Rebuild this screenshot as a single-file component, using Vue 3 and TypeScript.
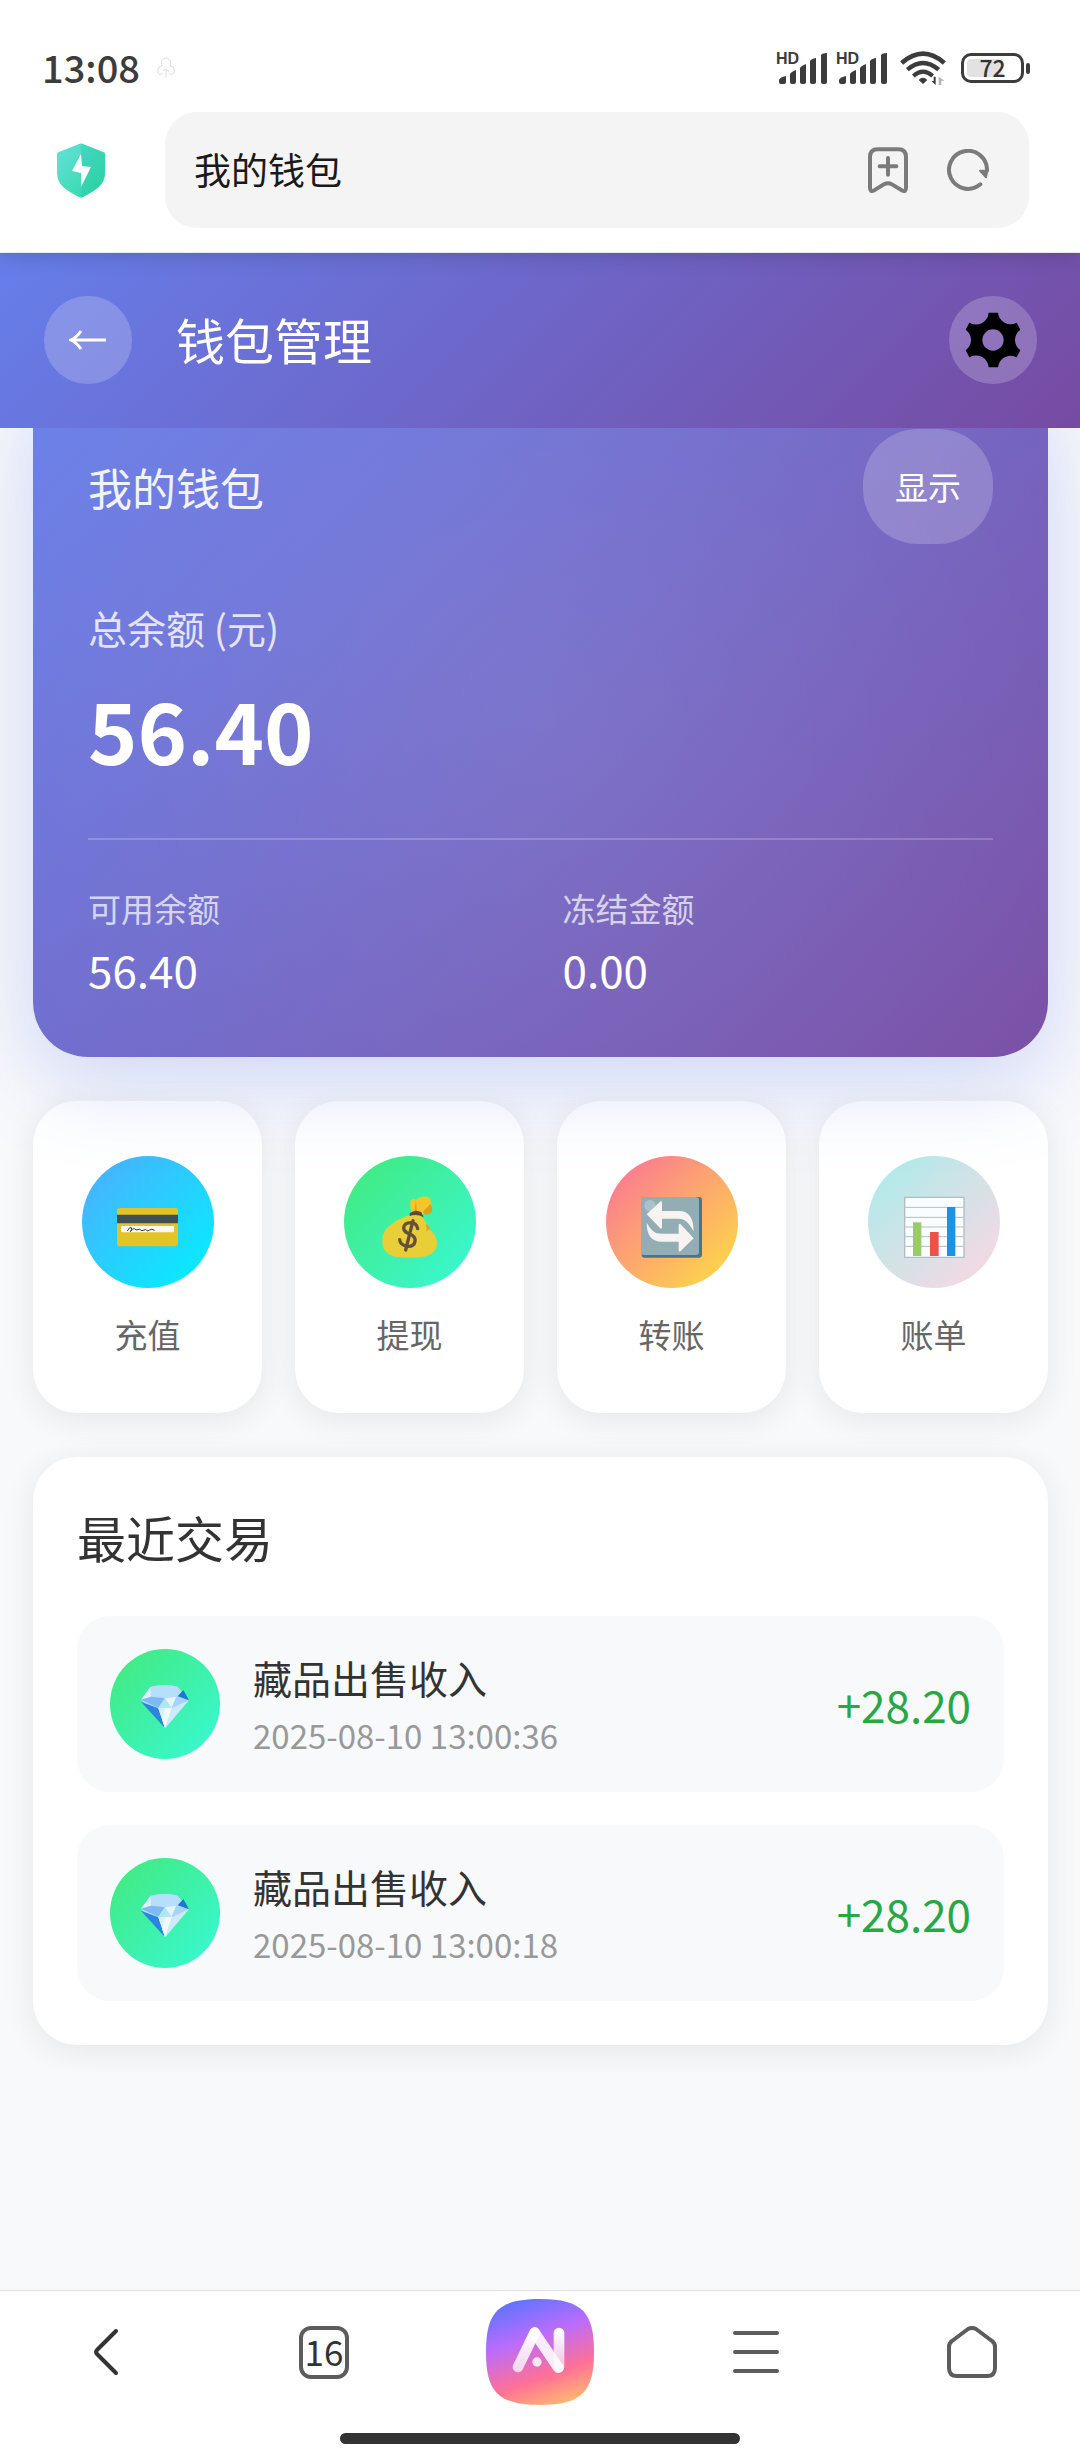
<script setup lang="ts">
import { ref } from 'vue'

interface QuickAction {
  id: 'recharge' | 'withdraw' | 'transfer' | 'bill'
  label: string
}

interface Transaction {
  id: number
  title: string
  time: string
  amount: string
}

const address = ref('我的钱包')

const actions: QuickAction[] = [
  { id: 'recharge', label: '充值' },
  { id: 'withdraw', label: '提现' },
  { id: 'transfer', label: '转账' },
  { id: 'bill', label: '账单' },
]

const transactions: Transaction[] = [
  { id: 1, title: '藏品出售收入', time: '2025-08-10 13:00:36', amount: '+28.20' },
  { id: 2, title: '藏品出售收入', time: '2025-08-10 13:00:18', amount: '+28.20' },
]
</script>

<template>
  <div class="screen">
    <div class="chrome">
      <div class="status">
        <div class="status-left">
          <span class="clock">13:08</span>
          <svg class="ghost" width="20" height="22" viewBox="0 0 20 22" fill="none" stroke="#dcdcdc" stroke-width="1" aria-hidden="true">
            <path d="M6 9C4 4 7 1 10 1s6 3 4 8c3 0 5 3 4 6s-4 3-5 1M6 9c-3 0-5 3-4 6s4 3 5 1M10 12v8M7 14l3-2 3 2" />
          </svg>
        </div>
        <div class="status-right">
          <div v-for="n in 2" :key="n" class="signal">
            <span class="hd">HD</span>
            <svg width="50" height="32" viewBox="0 0 50 32" fill="#3c3c3c" aria-hidden="true">
              <path d="M2 28q1-3 7-4v6q0 2-2 2H4q-2 0-2-2z" />
              <path d="M13 22q1-2 6-4v12q0 2-2 2h-2q-2 0-2-2z" />
              <path d="M23 16q1-2 6-4v18q0 2-2 2h-2q-2 0-2-2z" />
              <path d="M33 9q1-2 6-3v24q0 2-2 2h-2q-2 0-2-2z" />
              <path d="M44 3q1-2 6-2v29q0 2-2 2h-2q-2 0-2-2z" />
            </svg>
          </div>
          <svg class="wifi" width="46" height="34" viewBox="0 0 138 102" fill="none" stroke="#3c3c3c" aria-hidden="true">
            <path d="M5 36Q69-20 133 36" stroke-width="14" />
            <path d="M22 56Q69 16 116 56" stroke-width="13" />
            <path d="M40 75Q69 49 98 75" stroke-width="12" />
            <path d="M56 87q13-13 26 0L69 99z" fill="#3c3c3c" stroke="none" />
            <path d="M107 77v25L94 90h7V77z" fill="#3c3c3c" stroke="none" />
            <path d="M116 102V77l17 12h-9v13z" fill="#b5b5b5" stroke="none" />
          </svg>
          <div class="battery">
            <div class="battery-body"><span>72</span></div>
            <i></i>
          </div>
        </div>
      </div>

      <div class="address-row">
        <svg class="shield" width="48" height="55" viewBox="0 0 48 55" aria-hidden="true">
          <defs>
            <linearGradient id="shieldFill" x1="0" y1="0" x2="1" y2="1">
              <stop offset="0" stop-color="#66e0da" />
              <stop offset="1" stop-color="#2bd8a2" />
            </linearGradient>
          </defs>
          <path d="M22 1q2-1 4 0l20 8q2 0 2 2v19c0 12-9 17-22 24q-2 1-4 0C9 47 0 42 0 30V11q0-2 2-2z" fill="url(#shieldFill)" />
          <path d="M24 0q1 0 2 1l20 8q2 0 2 2v19c0 12-9 17-22 24l-2 1z" fill="#12b99a" fill-opacity=".22" />
          <path d="M24 11L15 28l9 2v14l10-20-9-1z" fill="#fff" />
        </svg>
        <div class="address">
          <input v-model="address" type="text" aria-label="地址栏" />
          <button type="button" aria-label="添加书签">
            <svg width="40" height="46" viewBox="384 350 120 138" fill="none" stroke="#7b7b7b" stroke-width="12" stroke-linecap="round" stroke-linejoin="round">
              <path d="M390 380q0-23 23-23h62q23 0 23 23v92q0 13-11 9l-31-19q-12-7-24 0l-31 19q-11 4-11-9z" />
              <path d="M444 383v50M419 408h50" />
            </svg>
          </button>
          <button type="button" aria-label="刷新">
            <svg width="42" height="42" viewBox="621 357 126 126" fill="none" stroke="#7b7b7b" stroke-width="12" stroke-linecap="round">
              <path d="M721 463A57 57 0 1 1 741 422" />
              <path d="M720 422h22l-4 20z" fill="#7b7b7b" stroke-width="6" stroke-linejoin="round" />
            </svg>
          </button>
        </div>
      </div>
    </div>

    <header class="header">
      <button type="button" class="round" aria-label="返回">
        <svg width="38" height="20" viewBox="0 0 38 20" fill="none" stroke="#fff" stroke-width="3">
          <path d="M37 10H3M12 1Q8 7 2 10q6 3 10 9" />
        </svg>
      </button>
      <h1>钱包管理</h1>
      <button type="button" class="round" aria-label="设置">
        <svg width="56" height="56" viewBox="677 217 168 168">
          <path
            fill="#000"
            fill-rule="evenodd"
            d="M748 219H776A38 38 0 0 0 832 249L843 270A38 38 0 0 0 843 332L832 353A38 38 0 0 0 776 383H748A38 38 0 0 0 690 353L679 332A38 38 0 0 0 679 270L690 249A38 38 0 0 0 748 219ZM761 269a32 32 0 1 0 0 64a32 32 0 1 0 0-64Z"
          />
        </svg>
      </button>
    </header>

    <main class="content">
      <section class="wallet">
        <div class="wallet-top">
          <h2>我的钱包</h2>
          <button type="button" class="toggle">显示</button>
        </div>
        <div class="total-label">总余额 (元)</div>
        <div class="total">56.40</div>
        <div class="split">
          <div>
            <div class="split-label">可用余额</div>
            <div class="split-value">56.40</div>
          </div>
          <div>
            <div class="split-label">冻结金额</div>
            <div class="split-value">0.00</div>
          </div>
        </div>
      </section>

      <nav class="actions" aria-label="快捷操作">
        <button v-for="action in actions" :key="action.id" type="button" class="action">
          <span class="action-icon" :class="action.id">
            <svg v-if="action.id === 'recharge'" width="64" height="74" viewBox="288 315 192 222">
              <rect x="291" y="384" width="183" height="115" rx="9" fill="#e3c427" />
              <path d="M291 404h183v26H291z" fill="#3f4f52" />
              <rect x="303" y="438" width="159" height="19" rx="3" fill="#f8faf5" />
              <path d="M322 453q7-14 12-10 3 4-3 12 8-12 13-9 3 6 10 3 5-3 8 1t10 0q5-3 8 1t9-1 15 1" fill="none" stroke="#2f3a3a" stroke-width="3" />
            </svg>
            <svg v-else-if="action.id === 'withdraw'" width="64" height="74" viewBox="1074 315 192 222">
              <path d="M1171 362q9-10 17-3 6-7 18-9 20-2 25 8l2 17q6 4 4 11-6 16-24 17l-38-8q-6-20-4-33z" fill="#f6c52b" />
              <path d="M1188 360l-4 32 6 1zM1231 372q10 12 3 25-9 9-21 6l-4-8z" fill="#d9a11c" />
              <path d="M1171 404q-46 14-74 44-15 26-8 52 8 24 36 30 44 5 88 0 32-6 38-34 2-26-22-48-12-26-26-42z" fill="#e9cf37" />
              <path d="M1169 400q17-14 35-3l7 15q-20-11-42-4z" fill="#5c4a3b" />
              <path d="M1218 430q9 6 12 17l-10 6z" fill="#d2a92c" />
              <path d="M1193 446q-3-17-20-18-21 0-22 16 1 12 18 18 18 6 16 22-3 16-22 15-22-2-24-20M1179 422l-22 88" fill="none" stroke="#665138" stroke-width="10" stroke-linecap="round" />
            </svg>
            <svg v-else-if="action.id === 'transfer'" width="64" height="74" viewBox="0 -30 192 222">
              <rect x="5" y="6" width="181" height="182" rx="9" fill="#4b7585" />
              <rect x="3" y="6" width="174" height="174" rx="9" fill="#93adb5" />
              <circle cx="30" cy="32" r="17" fill="#a7c3cc" />
              <path d="M20 58L60 20q6-5 6 3v25h50c32 0 45 22 45 61-14-24-23-37-45-38H66v25q0 8-6 3z" fill="#f7f3f0" />
              <path d="M161 130l-39 38q-6 5-6-3v-25H66c-32 0-46-20-46-57 14 24 24 33 46 33h50V91q0-8 6-3z" fill="#f7f3f0" />
            </svg>
            <svg v-else width="64" height="74" viewBox="0 -30 192 222">
              <path d="M8 7h178v180H8z" fill="#fafdfe" stroke="#afbec6" stroke-width="4" />
              <path d="M10 37h174M10 67h174M10 96h174M10 125h174M10 154h174" stroke="#afbec6" stroke-width="3" />
              <path d="M33 82h25v101H33z" fill="#9acb69" />
              <path d="M84 111h26v72H84z" fill="#ed5149" />
              <path d="M135 36h25v147h-25z" fill="#1d92e3" />
            </svg>
          </span>
          <span class="action-label">{{ action.label }}</span>
        </button>
      </nav>

      <section class="recent">
        <h2>最近交易</h2>
        <ul>
          <li v-for="item in transactions" :key="item.id">
            <span class="tx-icon">
              <svg width="48" height="50" viewBox="0 -18 144 150">
                <path d="M0 44L28 6Q72-6 110 5l34 39-72 86z" fill="#b4dcfa" />
                <path d="M28 6Q72-6 110 5l-4 30-34 5-44-8z" fill="#b7dffb" />
                <path d="M28 6L0 44l30-9z" fill="#dff1fd" />
                <path d="M0 44l30-9 42 5-20 28z" fill="#7db9f5" />
                <path d="M0 50l52 20 20 60z" fill="#2b84e0" />
                <path d="M52 70l20-30 20 28-20 62z" fill="#d8f1fc" />
                <path d="M52 70l20-30 20 28z" fill="#b0e5f2" />
                <path d="M72 40l34-5-14 33z" fill="#e5f4fe" />
                <path d="M106 35l38 9-52 26z" fill="#a5d3fa" />
                <path d="M92 70l52-24-72 84z" fill="#cfe8fb" />
                <path d="M72 68l20 2-20 60-8-24z" fill="#eefafe" />
                <path d="M127 15l17 31-34-12z" fill="#1979cd" />
              </svg>
            </span>
            <div class="tx-text">
              <div class="tx-title">{{ item.title }}</div>
              <time class="tx-time">{{ item.time }}</time>
            </div>
            <span class="tx-amount">{{ item.amount }}</span>
          </li>
        </ul>
      </section>
    </main>

    <footer class="toolbar">
      <div class="toolbar-row">
        <button type="button" aria-label="后退">
          <svg width="30" height="50" viewBox="0 0 30 50" fill="none" stroke="#333" stroke-width="4" stroke-linecap="round" stroke-linejoin="round">
            <path d="M23 4L4 23q-2 2 0 4l19 19" />
          </svg>
        </button>
        <button type="button" aria-label="标签页"><span class="tabs">16</span></button>
        <button type="button" aria-label="智能助手">
          <svg width="108" height="106" viewBox="138 86 324 318">
            <defs>
              <linearGradient id="aiFill" x1=".3" y1="0" x2=".65" y2="1">
                <stop offset="0" stop-color="#5f74ff" />
                <stop offset=".35" stop-color="#b86cff" />
                <stop offset=".73" stop-color="#ff7096" />
                <stop offset="1" stop-color="#ffb472" />
              </linearGradient>
              <linearGradient id="aiLeft" gradientUnits="userSpaceOnUse" x1="0" y1="180" x2="0" y2="300">
                <stop offset="0" stop-color="#fff" />
                <stop offset="1" stop-color="#fff" stop-opacity=".72" />
              </linearGradient>
              <linearGradient id="aiRight" gradientUnits="userSpaceOnUse" x1="0" y1="180" x2="0" y2="270">
                <stop offset="0" stop-color="#fff" />
                <stop offset="1" stop-color="#fff" stop-opacity=".65" />
              </linearGradient>
            </defs>
            <path d="M300 86C430 86 462 130 462 245S430 404 300 404 138 360 138 245 170 86 300 86Z" fill="url(#aiFill)" />
            <g fill="none" stroke-linecap="round" stroke-width="32">
              <path d="M357 188V290" stroke="url(#aiRight)" />
              <path d="M234 290L284 187" stroke="url(#aiLeft)" />
              <path d="M284 187L355 292" stroke="#fff" stroke-opacity=".88" />
            </g>
            <circle cx="291" cy="275" r="14" fill="#fde6f3" />
          </svg>
        </button>
        <button type="button" aria-label="菜单">
          <svg width="46" height="42" viewBox="0 0 46 42" stroke="#5c5c5c" stroke-width="4" stroke-linecap="round">
            <path d="M2 2h42M2 21h42M2 40h42" />
          </svg>
        </button>
        <button type="button" aria-label="主页">
          <svg width="50" height="52" viewBox="0 0 50 52" fill="none" stroke="#5c5c5c" stroke-width="4" stroke-linejoin="round">
            <path d="M21 3q4-2 8 0l16 12q3 2 3 6v21q0 8-8 8H10q-8 0-8-8V21q0-4 3-6z" />
          </svg>
        </button>
      </div>
      <div class="indicator"></div>
    </footer>
  </div>
</template>

<style>
body {
  margin: 0;
  background: #f8f9fb;
}
</style>

<style scoped>
.screen {
  display: flex;
  flex-direction: column;
  min-height: 100vh;
  font-family: "Noto Sans CJK SC", "Noto Sans", sans-serif;
  color: #333;
}

button {
  padding: 0;
  border: 0;
  background: none;
  font: inherit;
  color: inherit;
}

svg {
  display: block;
}

h1,
h2,
ul {
  margin: 0;
  padding: 0;
  font-weight: 400;
  list-style: none;
}

/* status bar and address bar */
.chrome {
  position: relative;
  z-index: 20;
  padding-bottom: 24px;
  border-bottom: 1px solid #e6e9f2;
  background: #fff;
  box-shadow: 0 0 22px rgba(0, 0, 0, 0.2);
}

.status {
  display: flex;
  align-items: center;
  justify-content: space-between;
  height: 40px;
  padding: 48px 50px 24px 42px;
}

.status-left,
.status-right,
.signal,
.battery {
  display: flex;
  align-items: center;
}

.status-left {
  gap: 16px;
}

.clock {
  padding-bottom: 3px;
  font-size: 38px;
  font-weight: 500;
  line-height: 40px;
  color: #3c3c3c;
}

.signal {
  position: relative;
  width: 50px;
  margin-right: 10px;
}

.hd {
  position: absolute;
  top: -2px;
  left: -1px;
  font-family: "Liberation Sans", sans-serif;
  font-size: 16px;
  font-weight: 700;
  line-height: 18px;
  color: #3c3c3c;
}

.wifi {
  margin: 0 15px 0 3px;
}

.battery-body {
  display: flex;
  align-items: center;
  justify-content: center;
  box-sizing: border-box;
  width: 63px;
  height: 30px;
  border: 3px solid #3c3c3c;
  border-radius: 10px;
  background: linear-gradient(90deg, #e2e2e2 66%, #fff 72%) content-box;
  padding: 3px;
  font-size: 23px;
  font-weight: 500;
  line-height: 24px;
}

.battery-body span {
  padding-bottom: 2px;
}

.battery i {
  width: 4px;
  height: 11px;
  margin-left: 2px;
  border-radius: 2px;
  background: #3c3c3c;
}

.address-row {
  display: flex;
  align-items: center;
  padding: 0 51px 0 57px;
}

.shield {
  flex: none;
  margin-right: 60px;
}

.address {
  display: flex;
  flex: 1;
  align-items: center;
  gap: 39px;
  height: 116px;
  padding: 0 40px 0 29px;
  border-radius: 32px;
  background: #f4f4f4;
}

.address input {
  flex: 1;
  min-width: 0;
  padding: 0 0 3px;
  border: 0;
  outline: 0;
  background: none;
  font: inherit;
  font-size: 37px;
  line-height: 54px;
  color: #1a1a1a;
}

/* page header */
.header {
  position: sticky;
  top: 0;
  z-index: 10;
  display: flex;
  align-items: center;
  gap: 44px;
  padding: 43px 43px 44px 44px;
  background: linear-gradient(135deg, #667eea 0%, #764ba2 100%);
  color: #fff;
}

.header h1 {
  flex: 1;
  padding-bottom: 2px;
  font-size: 49px;
  line-height: 72px;
}

.round {
  display: flex;
  align-items: center;
  justify-content: center;
  width: 88px;
  height: 88px;
  border-radius: 50%;
  background: rgba(255, 255, 255, 0.2);
}

.content {
  display: flex;
  flex: 1;
  flex-direction: column;
  gap: 44px;
  padding: 0 32px 44px 33px;
}

/* balance card, its top edge tucked under the header */
.wallet {
  position: relative;
  margin-top: -54px;
  padding: 55px;
  border-radius: 55px;
  background:
    radial-gradient(circle, rgba(255, 255, 255, 0.1) 0%, rgba(255, 255, 255, 0.03) 100%),
    linear-gradient(135deg, #667eea 0%, #764ba2 100%);
  box-shadow: 0 22px 88px rgba(102, 126, 234, 0.3);
  color: #fff;
}

.wallet-top {
  display: flex;
  align-items: center;
  justify-content: space-between;
  margin-bottom: 53px;
}

.wallet-top h2 {
  font-size: 44px;
  line-height: 64px;
  opacity: 0.9;
}

.toggle {
  padding: 33px 32px;
  border-radius: 55px;
  background: rgba(255, 255, 255, 0.2);
  font-size: 33px;
  line-height: 49px;
}

.total-label {
  margin-bottom: 8px;
  font-size: 39px;
  line-height: 60px;
  opacity: 0.8;
}

.total {
  margin-bottom: 45px;
  font-size: 84px;
  font-weight: 700;
  line-height: 128px;
}

.split {
  display: grid;
  grid-template-columns: 1fr 1fr;
  gap: 44px;
  padding: 42px 0 3px;
  border-top: 2px solid rgba(255, 255, 255, 0.2);
}

.split-label {
  margin-bottom: 5px;
  font-size: 33px;
  line-height: 52px;
  opacity: 0.7;
}

.split-value {
  font-size: 44px;
  line-height: 60px;
}

/* quick actions */
.actions {
  display: grid;
  grid-template-columns: repeat(4, 1fr);
  gap: 33px;
}

.action {
  display: flex;
  flex-direction: column;
  align-items: center;
  gap: 22px;
  padding: 55px 0;
  border-radius: 44px;
  background: #fff;
  box-shadow: 0 6px 33px rgba(0, 0, 0, 0.08);
}

.action-icon {
  display: flex;
  align-items: center;
  justify-content: center;
  width: 132px;
  height: 132px;
  border-radius: 50%;
}

.recharge {
  background: linear-gradient(135deg, #4facfe, #00f2fe);
}

.withdraw {
  background: linear-gradient(135deg, #43e97b, #38f9d7);
}

.transfer {
  background: linear-gradient(135deg, #fa709a, #fee140);
}

.bill {
  background: linear-gradient(135deg, #a8edea, #fed6e3);
}

.action-label {
  font-size: 33px;
  line-height: 48px;
  color: #666;
}

/* transactions */
.recent {
  padding: 44px;
  border-radius: 44px;
  background: #fff;
  box-shadow: 0 6px 33px rgba(0, 0, 0, 0.08);
}

.recent h2 {
  margin-bottom: 44px;
  font-size: 49px;
  line-height: 71px;
}

.recent ul {
  display: flex;
  flex-direction: column;
  gap: 33px;
}

.recent li {
  display: flex;
  align-items: center;
  gap: 33px;
  padding: 33px;
  border-radius: 33px;
  background: #f8f9fb;
}

.tx-icon {
  display: flex;
  align-items: center;
  justify-content: center;
  width: 110px;
  height: 110px;
  border-radius: 50%;
  background: linear-gradient(135deg, #43e97b, #38f9d7);
}

.tx-text {
  flex: 1;
}

.tx-title {
  margin-bottom: 6px;
  font-size: 39px;
  line-height: 56px;
}

.tx-time {
  display: block;
  font-size: 33px;
  line-height: 48px;
  color: #999;
}

.tx-amount {
  font-size: 44px;
  line-height: 64px;
  color: #28a745;
}

/* browser toolbar */
.toolbar {
  padding-bottom: 16px;
  border-top: 1px solid #e0e0e0;
  background: #fff;
}

.toolbar-row {
  display: grid;
  grid-template-columns: repeat(5, 1fr);
  height: 122px;
  margin-bottom: 20px;
}

.toolbar-row button {
  display: flex;
  align-items: center;
  justify-content: center;
}

.tabs {
  box-sizing: border-box;
  width: 50px;
  height: 53px;
  border: 4px solid #5c5c5c;
  border-radius: 12px;
  font-size: 35px;
  line-height: 42px;
  text-align: center;
}

.indicator {
  width: 37%;
  height: 11px;
  margin: 0 auto;
  border-radius: 6px;
  background: #333;
}
</style>
